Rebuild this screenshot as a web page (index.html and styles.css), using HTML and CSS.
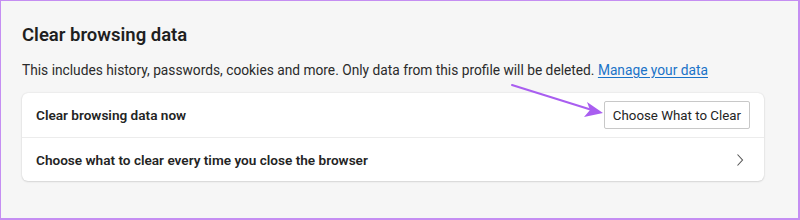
FILE: index.html
```html
<!DOCTYPE html>
<html lang="en">
<head>
    <meta charset="UTF-8">
    <meta name="viewport" content="width=device-width, initial-scale=1.0">
    <title>Clear browsing data</title>
    <link rel="stylesheet" href="styles.css">
</head>
<body>
    <div class="frame">
        <!-- Privacy section -->
        <section class="privacy-section">
            <h2>Clear browsing data</h2>
            <p class="desc">
                This includes history, passwords, cookies and more. Only data from this profile will be deleted.
                <a href="#" class="link">Manage your data</a>
            </p>

            <div class="settings-card">
                <div class="settings-row">
                    <span class="row-label">Clear browsing data now</span>
                    <button type="button" class="btn">Choose What to Clear</button>
                </div>
                <div class="settings-row">
                    <span class="row-label">Choose what to clear every time you close the browser</span>
                    <svg class="chevron" width="8" height="14" viewBox="0 0 8 14">
                        <path d="M1.5 1.5 L6.5 7 L1.5 12.5" fill="none" stroke="#555" stroke-width="1.1"/>
                    </svg>
                </div>
            </div>
        </section>

        <!-- Annotation arrow -->
        <svg class="annotation" width="800" height="220" viewBox="0 0 800 220">
            <line x1="512" y1="85" x2="592" y2="110" stroke="#a95ef0" stroke-width="2" stroke-linecap="round"/>
            <path d="M603 113 L587 102 L590 110 L584 117 Z" fill="#a95ef0"/>
        </svg>
    </div>
</body>
</html>
```

FILE: styles.css
```css
* {
    box-sizing: border-box;
}

body {
    margin: 0;
    font-family: "Roboto", "Liberation Sans", sans-serif;
    color: #1f1f1f;
}

.frame {
    position: relative;
    width: 800px;
    height: 220px;
    background: #f6f6f6;
    border: 1px solid #c58ef2;
    border-right-width: 2px;
    border-bottom-width: 2px;
    overflow: hidden;
}

.privacy-section {
    padding: 23px 34px 0 21px;
}

h2 {
    margin: 0 0 16px;
    font-size: 18.5px;
    font-weight: 600;
}

.desc {
    margin: 0 0 15px;
    font-size: 13.75px;
    color: #2b2b2b;
}

.link {
    color: #1a73c8;
    text-decoration: underline;
    text-underline-offset: 2px;
}

.settings-card {
    background: #fff;
    border-radius: 6px;
    box-shadow: 0 0 2px rgba(0, 0, 0, 0.12), 0 1px 2px rgba(0, 0, 0, 0.1);
}

.settings-row {
    display: flex;
    align-items: center;
    justify-content: space-between;
    height: 44px;
    padding: 0 14px 0 14px;
}

.settings-row + .settings-row {
    border-top: 1px solid #ececec;
    padding-right: 20px;
}

.row-label {
    font-size: 13.6px;
    font-weight: 600;
    color: #242424;
}

.btn {
    height: 28px;
    padding: 0 8px;
    border: 1px solid #c8c8c8;
    border-radius: 2px;
    background: #fff;
    font-family: inherit;
    font-size: 13.3px;
    color: #242424;
}

.annotation {
    position: absolute;
    top: -1px;
    left: -1px;
    pointer-events: none;
}
```
